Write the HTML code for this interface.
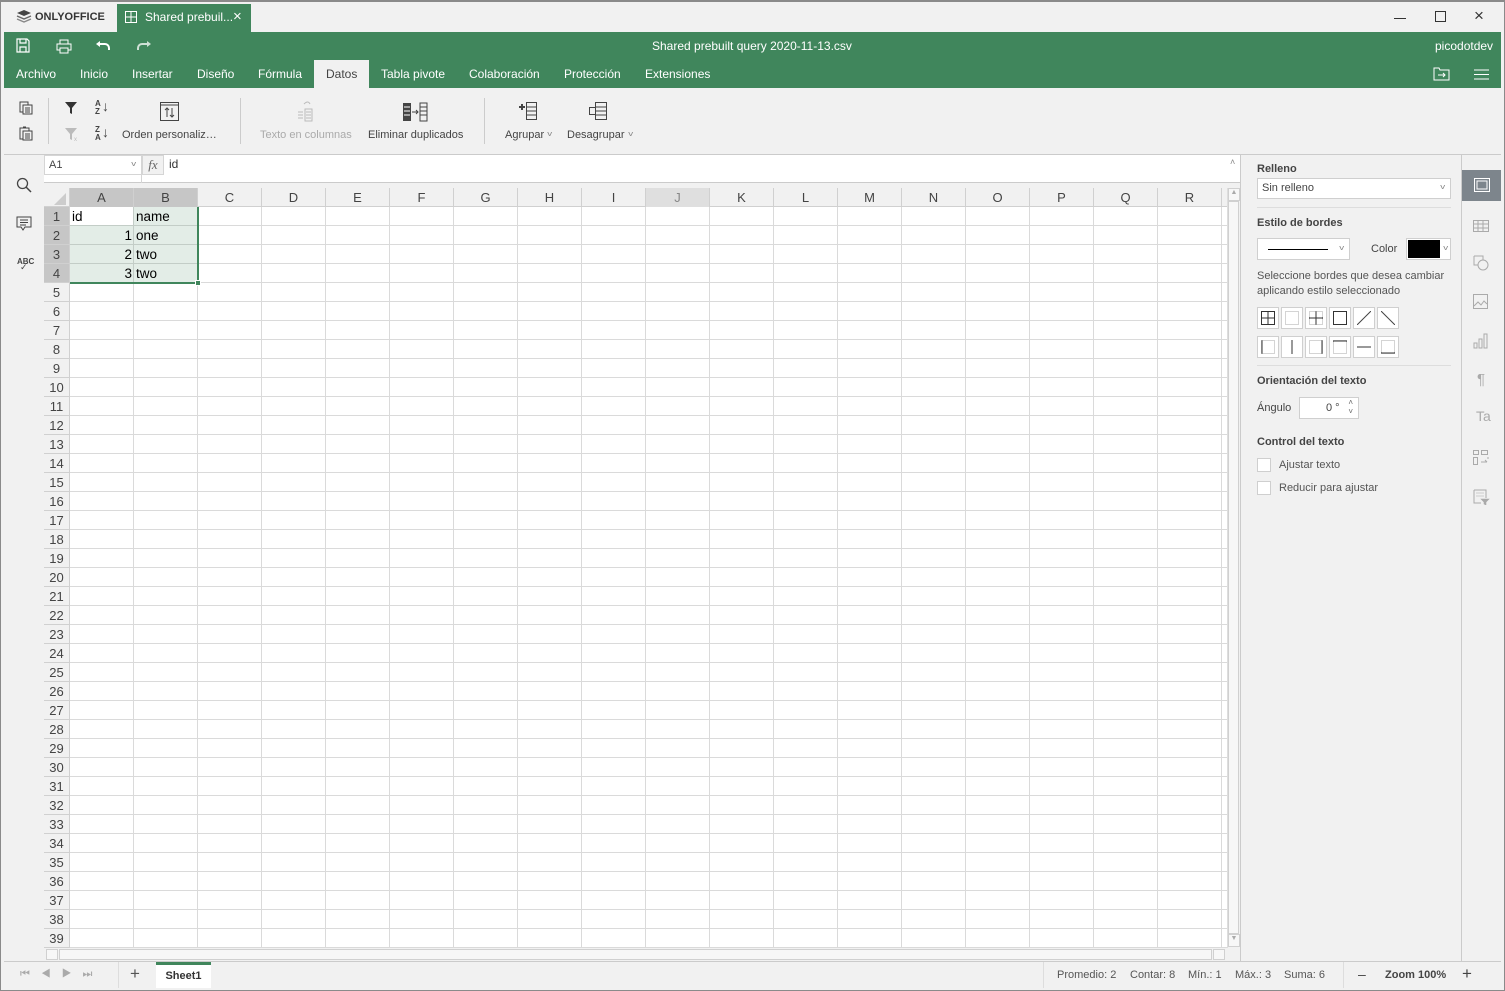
<!DOCTYPE html>
<html><head><meta charset="utf-8"><style>
*{box-sizing:border-box;margin:0;padding:0}
body{width:1505px;height:991px;overflow:hidden;background:#f1f1f1;font-family:"Liberation Sans",sans-serif;font-size:12px;color:#444;position:relative}
.a{position:absolute}
.g{color:#fff}
.tab{position:absolute;top:60px;height:28px;line-height:28px;color:#fff;font-size:12px}
.tl{position:absolute;font-size:11px;color:#444;white-space:nowrap}
.ch{position:absolute;top:188px;height:19px;line-height:19px;text-align:center;width:64px;font-size:13px;color:#444;border-right:1px solid #d0d0d0}
.rh{position:absolute;left:44px;width:25px;height:19px;line-height:19px;text-align:center;font-size:13px;color:#444;border-bottom:1px solid #d0d0d0}
.cell{position:absolute;height:19px;line-height:19px;font-family:"Liberation Sans",sans-serif;font-size:13.5px;color:#000}
.bb{position:absolute;width:22px;height:22px;border:1px solid #cfcfcf;background:#fff}
.ri{position:absolute;left:1473px;width:18px;height:16px}
.st{position:absolute;top:969px;font-size:11px;color:#555;white-space:nowrap}
.chev{position:absolute;font-size:7px;color:#888;transform:scaleX(1.4)}
</style></head><body>
<div class="a" style="left:0;top:0;width:1505px;height:991px;border:1px solid #8a8a8a;border-top:2px solid #8a8a8a;pointer-events:none;z-index:9"></div>
<div class="a" style="left:16px;top:9px;width:16px;height:14px">
<svg width="16" height="14" viewBox="0 0 16 14"><path d="M8 1L15 4 8 7 1 4Z" fill="#444"/><path d="M1 7L8 10 15 7" fill="none" stroke="#666" stroke-width="1.4"/><path d="M1 10L8 13 15 10" fill="none" stroke="#888" stroke-width="1.4"/></svg></div>
<div class="a" style="left:35px;top:11px;font-size:11px;font-weight:bold;color:#333">ONLYOFFICE</div>
<div class="a" style="left:117px;top:4px;width:134px;height:28px;background:#40865c"></div>
<svg class="a" style="left:125px;top:11px" width="12" height="12"><rect x=".5" y=".5" width="11" height="11" fill="none" stroke="#fff"/><path d="M6 0V12M0 6H12" stroke="#fff"/></svg>
<div class="a g" style="left:145px;top:10px;font-size:12px">Shared prebuil...</div>
<div class="a g" style="left:233px;top:8px;font-size:15px">×</div>
<div class="a" style="left:1394px;top:18px;width:12px;height:1px;background:#333"></div>
<div class="a" style="left:1435px;top:11px;width:11px;height:11px;border:1px solid #333"></div>
<div class="a" style="left:1474px;top:6px;font-size:17px;color:#333">×</div>
<div class="a" style="left:4px;top:32px;width:1497px;height:56px;background:#40865c"></div>
<svg class="a" style="left:16px;top:38px" width="14" height="15"><path d="M1 1H11L13 3V14H1Z M4 1V5H10V1 M4 14V9H10V14" fill="none" stroke="#fff" stroke-width="1.2"/></svg>
<svg class="a" style="left:56px;top:39px" width="16" height="15"><rect x="4" y="1" width="8" height="4" fill="none" stroke="#fff"/><rect x="1" y="5" width="14" height="6" fill="none" stroke="#fff"/><rect x="4" y="9" width="8" height="5" fill="#40865c" stroke="#fff"/></svg>
<svg class="a" style="left:96px;top:41px" width="14" height="10"><path d="M3 3H9A4 4 0 0 1 13 7V9" fill="none" stroke="#fff" stroke-width="2"/><path d="M0 3L4 0V6Z" fill="#fff"/></svg>
<svg class="a" style="left:137px;top:41px" width="14" height="10"><path d="M11 3H5A4 4 0 0 0 1 7V9" fill="none" stroke="#cfe0d5" stroke-width="2"/><path d="M14 3L10 0V6Z" fill="#cfe0d5"/></svg>
<div class="a g" style="left:652px;top:39px;font-size:12px">Shared prebuilt query 2020-11-13.csv</div>
<div class="a g" style="left:1435px;top:39px;font-size:12px">picodotdev</div>
<div class="tab" style="left:16px">Archivo</div>
<div class="tab" style="left:80px">Inicio</div>
<div class="tab" style="left:132px">Insertar</div>
<div class="tab" style="left:197px">Diseño</div>
<div class="tab" style="left:258px">Fórmula</div>
<div class="a" style="left:314px;top:60px;width:55px;height:28px;background:#f1f1f1"></div>
<div class="tab" style="left:326px;color:#444">Datos</div>
<div class="tab" style="left:381px">Tabla pivote</div>
<div class="tab" style="left:469px">Colaboración</div>
<div class="tab" style="left:564px">Protección</div>
<div class="tab" style="left:645px">Extensiones</div>
<svg class="a" style="left:1433px;top:67px" width="17" height="14"><path d="M1 1H6L7 3H16V13H1Z" fill="none" stroke="#fff"/><path d="M5 8H12M10 6L12 8 10 10" fill="none" stroke="#fff"/></svg>
<svg class="a" style="left:1474px;top:69px" width="15" height="11"><path d="M0 1H15M0 5.5H15M0 10H15" stroke="#fff"/></svg>
<svg class="a" style="left:19px;top:101px" width="14" height="14"><rect x="1" y="1" width="8" height="10" fill="none" stroke="#444"/><rect x="4" y="4" width="9" height="9" fill="#f1f1f1" stroke="#444"/><path d="M6 7H11M6 9H11M6 11H11" stroke="#444"/></svg>
<svg class="a" style="left:19px;top:126px" width="14" height="15"><rect x="1" y="2" width="9" height="11" fill="none" stroke="#444"/><rect x="4" y="5" width="9" height="9" fill="#f1f1f1" stroke="#444"/><path d="M6 8H11M6 10H11M6 12H11M4 1H7" stroke="#444"/></svg>
<div class="a" style="left:48px;top:98px;width:1px;height:46px;background:#ccc"></div>
<svg class="a" style="left:65px;top:102px" width="12" height="12"><path d="M0 0H12L7 6V12L5 11V6Z" fill="#333"/></svg>
<svg class="a" style="left:65px;top:128px" width="14" height="13"><path d="M0 0H12L7 6V12L5 11V6Z" fill="#bbb"/><text x="9" y="13" font-size="6" fill="#bbb">x</text></svg>
<div class="a" style="left:95px;top:100px;font-size:8px;line-height:8px;color:#444;font-weight:bold">A<br>Z</div>
<div class="a" style="left:102px;top:98px;font-size:14px;color:#444">↓</div>
<div class="a" style="left:95px;top:126px;font-size:8px;line-height:8px;color:#444;font-weight:bold">Z<br>A</div>
<div class="a" style="left:102px;top:124px;font-size:14px;color:#444">↓</div>
<svg class="a" style="left:160px;top:102px" width="20" height="20"><rect x=".5" y=".5" width="18" height="18" fill="none" stroke="#444"/><path d="M0 3H19" stroke="#444"/><path d="M7 15V6M5 8L7 6 9 8M12 6V15M10 13L12 15 14 13" fill="none" stroke="#444"/></svg>
<div class="tl" style="left:122px;top:129px">Orden personaliz…</div>
<div class="a" style="left:240px;top:98px;width:1px;height:46px;background:#ccc"></div>
<svg class="a" style="left:296px;top:100px" width="20" height="22"><path d="M2 12H7M2 15H7M2 18H7" stroke="#bbb"/><rect x="9" y="9" width="7" height="12" fill="none" stroke="#bbb"/><path d="M10 12H15M10 15H15M10 18H15M8 4Q12 0 14 4" fill="none" stroke="#bbb"/></svg>
<div class="tl" style="left:260px;top:129px;color:#aaa">Texto en columnas</div>
<svg class="a" style="left:402px;top:102px" width="26" height="20"><rect x="1" y="1" width="8" height="18" fill="#444"/><path d="M2 5H8M2 9H8M2 13H8" stroke="#fff"/><rect x="18" y="1" width="7" height="18" fill="none" stroke="#444"/><path d="M18 5H25M18 9H25M18 13H25M10 10H16M14 8L16 10 14 12" fill="none" stroke="#444"/></svg>
<div class="tl" style="left:368px;top:129px">Eliminar duplicados</div>
<div class="a" style="left:484px;top:98px;width:1px;height:46px;background:#ccc"></div>
<svg class="a" style="left:518px;top:101px" width="20" height="20"><path d="M1 6H7M4 3V9" stroke="#444" stroke-width="2"/><rect x="8.5" y="1.5" width="10" height="17" fill="none" stroke="#444"/><path d="M8 6H19M8 10H19M8 14H19" stroke="#444"/></svg>
<div class="tl" style="left:505px;top:129px">Agrupar</div><span class="chev" style="left:548px;top:131px">v</span>
<svg class="a" style="left:588px;top:101px" width="20" height="20"><rect x="1.5" y="6.5" width="6" height="7" fill="none" stroke="#444"/><rect x="7.5" y="1.5" width="11" height="17" fill="none" stroke="#444"/><path d="M8 6H19M8 10H19M8 14H19" stroke="#444"/></svg>
<div class="tl" style="left:567px;top:129px">Desagrupar</div><span class="chev" style="left:629px;top:131px">v</span>
<div class="a" style="left:4px;top:154px;width:1497px;height:1px;background:#cbcbcb"></div>
<svg class="a" style="left:16px;top:177px" width="16" height="16"><circle cx="6.5" cy="6.5" r="5" fill="none" stroke="#444" stroke-width="1.3"/><path d="M10 10L15 15" stroke="#444" stroke-width="1.5"/></svg>
<svg class="a" style="left:16px;top:216px" width="16" height="16"><path d="M1 1H15V11H9L7 14 5 11H1Z" fill="none" stroke="#444"/><path d="M4 4H12M4 6.5H12M4 9H10" stroke="#444"/></svg>
<div class="a" style="left:17px;top:257px;font-size:8px;color:#444;font-weight:bold">ABC</div>
<div class="a" style="left:20px;top:262px;font-size:9px;color:#444">✓</div>
<div class="a" style="left:44px;top:155px;width:1196px;height:28px;background:#fff;border-bottom:1px solid #cbcbcb"></div>
<div class="a" style="left:44px;top:155px;width:98px;height:20px;background:#fff;border:1px solid #d5d5d5;font-size:11px;padding:3px 4px;color:#444">A1<span class="chev" style="right:6px;top:5px">v</span></div>
<div class="a" style="left:44px;top:175px;width:98px;height:8px;border-right:1px solid #d5d5d5"></div>
<div class="a" style="left:142px;top:155px;width:22px;height:20px;background:#f1f1f1;border:1px solid #d5d5d5;font-family:'Liberation Serif',serif;font-style:italic;font-size:13px;color:#666;text-align:center;line-height:18px">fx</div>
<div class="a" style="left:169px;top:157px;font-size:12px;color:#333">id</div>
<div class="a" style="left:1230px;top:157px;font-size:9px;color:#888">˄</div>
<div class="a" style="left:44px;top:184px;width:1196px;height:778px;background:#f1f1f1"></div>
<div class="a" style="left:44px;top:188px;width:1183px;height:760px;background:#fff"></div>
<div class="a" style="left:70px;top:207px;width:1157px;height:741px;background-image:repeating-linear-gradient(90deg,transparent 0 63px,#dadada 63px 64px),repeating-linear-gradient(180deg,transparent 0 18px,#dadada 18px 19px)"></div>
<div class="a" style="left:44px;top:188px;width:1183px;height:19px;background:#f1f1f1;border-bottom:1px solid #d0d0d0"></div>
<div class="a" style="left:44px;top:207px;width:26px;height:741px;background:#f1f1f1;border-right:1px solid #d0d0d0"></div>
<div class="a" style="left:44px;top:188px;width:26px;height:19px;border-right:1px solid #d0d0d0"></div>
<svg class="a" style="left:54px;top:193px" width="12" height="12"><path d="M12 0V12H0Z" fill="#ccc"/></svg>
<div class="a" style="left:70px;top:188px;width:128px;height:19px;background:#c6c6c6"></div>
<div class="a" style="left:646px;top:188px;width:64px;height:19px;background:#dfdfdf"></div>
<div class="a" style="left:44px;top:207px;width:25px;height:76px;background:#c6c6c6"></div>
<div class="ch" style="left:70px">A</div><div class="ch" style="left:134px">B</div><div class="ch" style="left:198px">C</div><div class="ch" style="left:262px">D</div><div class="ch" style="left:326px">E</div><div class="ch" style="left:390px">F</div><div class="ch" style="left:454px">G</div><div class="ch" style="left:518px">H</div><div class="ch" style="left:582px">I</div><div class="ch" style="left:646px;color:#888">J</div><div class="ch" style="left:710px">K</div><div class="ch" style="left:774px">L</div><div class="ch" style="left:838px">M</div><div class="ch" style="left:902px">N</div><div class="ch" style="left:966px">O</div><div class="ch" style="left:1030px">P</div><div class="ch" style="left:1094px">Q</div><div class="ch" style="left:1158px">R</div>
<div class="rh" style="top:207px">1</div><div class="rh" style="top:226px">2</div><div class="rh" style="top:245px">3</div><div class="rh" style="top:264px">4</div><div class="rh" style="top:283px">5</div><div class="rh" style="top:302px">6</div><div class="rh" style="top:321px">7</div><div class="rh" style="top:340px">8</div><div class="rh" style="top:359px">9</div><div class="rh" style="top:378px">10</div><div class="rh" style="top:397px">11</div><div class="rh" style="top:416px">12</div><div class="rh" style="top:435px">13</div><div class="rh" style="top:454px">14</div><div class="rh" style="top:473px">15</div><div class="rh" style="top:492px">16</div><div class="rh" style="top:511px">17</div><div class="rh" style="top:530px">18</div><div class="rh" style="top:549px">19</div><div class="rh" style="top:568px">20</div><div class="rh" style="top:587px">21</div><div class="rh" style="top:606px">22</div><div class="rh" style="top:625px">23</div><div class="rh" style="top:644px">24</div><div class="rh" style="top:663px">25</div><div class="rh" style="top:682px">26</div><div class="rh" style="top:701px">27</div><div class="rh" style="top:720px">28</div><div class="rh" style="top:739px">29</div><div class="rh" style="top:758px">30</div><div class="rh" style="top:777px">31</div><div class="rh" style="top:796px">32</div><div class="rh" style="top:815px">33</div><div class="rh" style="top:834px">34</div><div class="rh" style="top:853px">35</div><div class="rh" style="top:872px">36</div><div class="rh" style="top:891px">37</div><div class="rh" style="top:910px">38</div><div class="rh" style="top:929px">39</div>
<div class="a" style="left:70px;top:207px;width:129px;height:77px;background:rgba(64,134,92,0.15);border-right:2px solid #40865c;border-bottom:2px solid #40865c"></div>
<div class="a" style="left:70px;top:207px;width:63px;height:18px;background:#fff"></div>
<div class="a" style="left:195px;top:280px;width:6px;height:6px;background:#40865c;border:1px solid #fff"></div>
<div class="cell" style="left:72px;top:207px">id</div>
<div class="cell" style="left:136px;top:207px">name</div>
<div class="cell" style="left:70px;top:226px;width:62px;text-align:right">1</div>
<div class="cell" style="left:136px;top:226px">one</div>
<div class="cell" style="left:70px;top:245px;width:62px;text-align:right">2</div>
<div class="cell" style="left:136px;top:245px">two</div>
<div class="cell" style="left:70px;top:264px;width:62px;text-align:right">3</div>
<div class="cell" style="left:136px;top:264px">two</div>
<div class="a" style="left:1227px;top:188px;width:13px;height:760px;background:#f1f1f1;border-left:1px solid #ddd"></div>
<div class="a" style="left:1228px;top:188px;width:12px;height:13px;border:1px solid #d0d0d0;background:#f7f7f7;font-size:7px;color:#aaa;text-align:center">▲</div>
<div class="a" style="left:1228px;top:201px;width:11px;height:733px;border:1px solid #d0d0d0;background:#f7f7f7"></div>
<div class="a" style="left:1228px;top:934px;width:12px;height:13px;border:1px solid #d0d0d0;background:#f7f7f7;font-size:7px;color:#aaa;text-align:center">▼</div>
<div class="a" style="left:44px;top:948px;width:1183px;height:13px;background:#f1f1f1"></div>
<div class="a" style="left:46px;top:949px;width:12px;height:11px;border:1px solid #d0d0d0;background:#f7f7f7"></div>
<div class="a" style="left:59px;top:949px;width:1153px;height:11px;border:1px solid #d0d0d0;background:#f7f7f7"></div>
<div class="a" style="left:1213px;top:949px;width:12px;height:11px;border:1px solid #d0d0d0;background:#f7f7f7"></div>
<div class="a" style="left:1240px;top:155px;width:1px;height:807px;background:#cbcbcb"></div>
<div class="a" style="left:1461px;top:155px;width:1px;height:807px;background:#cbcbcb"></div>
<div class="a" style="left:1257px;top:163px;font-size:11px;font-weight:bold;color:#444">Relleno</div>
<div class="a" style="left:1257px;top:178px;width:194px;height:21px;background:#fff;border:1px solid #cfcfcf;font-size:11px;padding:3px 4px">Sin relleno<span class="chev" style="right:6px;top:5px">v</span></div>
<div class="a" style="left:1257px;top:207px;width:194px;height:1px;background:#ddd"></div>
<div class="a" style="left:1257px;top:217px;font-size:11px;font-weight:bold;color:#444">Estilo de bordes</div>
<div class="a" style="left:1257px;top:238px;width:93px;height:22px;background:#fff;border:1px solid #cfcfcf"><div class="a" style="left:10px;top:10px;width:60px;height:1px;background:#000"></div><span class="chev" style="right:6px;top:6px">v</span></div>
<div class="a" style="left:1371px;top:243px;font-size:11px">Color</div>
<div class="a" style="left:1406px;top:238px;width:45px;height:22px;background:#fff;border:1px solid #cfcfcf"><div class="a" style="left:1px;top:1px;width:32px;height:18px;background:#000"></div><span class="chev" style="right:3px;top:6px">v</span></div>
<div class="a" style="left:1257px;top:269px;font-size:11px;line-height:15px;color:#555">Seleccione bordes que desea cambiar<br>aplicando estilo seleccionado</div>
<div class="bb" style="left:1257px;top:307px"><svg class="a" style="left:3px;top:3px" width="14" height="14"><rect x=".5" y=".5" width="13" height="13" fill="none" stroke="#333"/><path d="M7 0V14M0 7H14" stroke="#333"/></svg></div>
<div class="bb" style="left:1281px;top:307px"><svg class="a" style="left:3px;top:3px" width="14" height="14"><rect x=".5" y=".5" width="13" height="13" fill="none" stroke="#aaa" stroke-dasharray="1 1"/></svg></div>
<div class="bb" style="left:1305px;top:307px"><svg class="a" style="left:3px;top:3px" width="14" height="14"><rect x=".5" y=".5" width="13" height="13" fill="none" stroke="#aaa" stroke-dasharray="1 1"/><path d="M7 0V14M0 7H14" stroke="#333"/></svg></div>
<div class="bb" style="left:1329px;top:307px"><svg class="a" style="left:3px;top:3px" width="14" height="14"><rect x=".5" y=".5" width="13" height="13" fill="none" stroke="#333"/></svg></div>
<div class="bb" style="left:1353px;top:307px"><svg class="a" style="left:3px;top:3px" width="14" height="14"><path d="M0 14L14 0" stroke="#444"/></svg></div>
<div class="bb" style="left:1377px;top:307px"><svg class="a" style="left:3px;top:3px" width="14" height="14"><path d="M0 0L14 14" stroke="#444"/></svg></div>
<div class="bb" style="left:1257px;top:336px"><svg class="a" style="left:3px;top:3px" width="14" height="14"><rect x=".5" y=".5" width="13" height="13" fill="none" stroke="#aaa" stroke-dasharray="1 1"/><path d="M1 0V14" stroke="#333"/></svg></div>
<div class="bb" style="left:1281px;top:336px"><svg class="a" style="left:3px;top:3px" width="14" height="14"><path d="M7 0V14" stroke="#333"/></svg></div>
<div class="bb" style="left:1305px;top:336px"><svg class="a" style="left:3px;top:3px" width="14" height="14"><rect x=".5" y=".5" width="13" height="13" fill="none" stroke="#aaa" stroke-dasharray="1 1"/><path d="M13 0V14" stroke="#333"/></svg></div>
<div class="bb" style="left:1329px;top:336px"><svg class="a" style="left:3px;top:3px" width="14" height="14"><rect x=".5" y=".5" width="13" height="13" fill="none" stroke="#aaa" stroke-dasharray="1 1"/><path d="M0 1H14" stroke="#333"/></svg></div>
<div class="bb" style="left:1353px;top:336px"><svg class="a" style="left:3px;top:3px" width="14" height="14"><path d="M0 7H14" stroke="#333"/></svg></div>
<div class="bb" style="left:1377px;top:336px"><svg class="a" style="left:3px;top:3px" width="14" height="14"><rect x=".5" y=".5" width="13" height="13" fill="none" stroke="#aaa" stroke-dasharray="1 1"/><path d="M0 13H14" stroke="#333"/></svg></div>
<div class="a" style="left:1257px;top:365px;width:194px;height:1px;background:#ddd"></div>
<div class="a" style="left:1257px;top:375px;font-size:11px;font-weight:bold;color:#444">Orientación del texto</div>
<div class="a" style="left:1257px;top:402px;font-size:11px">Ángulo</div>
<div class="a" style="left:1299px;top:397px;width:60px;height:22px;background:#fff;border:1px solid #cfcfcf;font-size:11px;padding:4px 0 0 26px">0 °<span style="position:absolute;right:5px;top:0;font-size:8px;color:#666;line-height:9px">˄<br>˅</span></div>
<div class="a" style="left:1257px;top:436px;font-size:11px;font-weight:bold;color:#444">Control del texto</div>
<div class="a" style="left:1257px;top:458px;width:14px;height:14px;background:#fff;border:1px solid #cfcfcf"></div>
<div class="a" style="left:1279px;top:459px;font-size:11px;color:#555">Ajustar texto</div>
<div class="a" style="left:1257px;top:481px;width:14px;height:14px;background:#fff;border:1px solid #cfcfcf"></div>
<div class="a" style="left:1279px;top:482px;font-size:11px;color:#555">Reducir para ajustar</div>
<div class="a" style="left:1462px;top:170px;width:39px;height:31px;background:#7d858c"></div>
<svg class="a" style="left:1474px;top:178px" width="16" height="14"><rect x=".5" y=".5" width="15" height="13" fill="none" stroke="#fff"/><rect x="3" y="3" width="10" height="8" fill="none" stroke="#fff"/></svg>
<svg class="ri" style="top:218px"><rect x=".5" y="2.5" width="15" height="11" fill="none" stroke="#aaa"/><path d="M0 6H16M0 10H16M5 3V13M10 3V13" stroke="#aaa"/></svg>
<svg class="ri" style="top:255px"><path d="M1 1H10V5" fill="none" stroke="#aaa"/><path d="M1 1V10H5" fill="none" stroke="#aaa"/><circle cx="10" cy="10" r="5" fill="none" stroke="#aaa"/></svg>
<svg class="ri" style="top:294px"><rect x=".5" y=".5" width="14" height="14" fill="none" stroke="#aaa"/><path d="M1 12L5 8 8 11 11 7 14 10" fill="none" stroke="#aaa"/></svg>
<svg class="ri" style="top:333px"><path d="M1 10H4V15H1ZM6 6H9V15H6ZM11 1H14V15H11Z" fill="none" stroke="#aaa"/></svg>
<div class="a" style="left:1477px;top:371px;font-size:15px;color:#aaa">¶</div>
<div class="a" style="left:1476px;top:408px;font-size:14px;color:#aaa">Ta</div>
<svg class="ri" style="top:450px"><rect x=".5" y=".5" width="5" height="4" fill="none" stroke="#aaa"/><rect x="8.5" y=".5" width="6" height="4" fill="none" stroke="#aaa"/><rect x=".5" y="7.5" width="4" height="7" fill="none" stroke="#aaa"/><path d="M8 12H14M12 10L14 12M15 9V7" fill="none" stroke="#aaa"/></svg>
<svg class="ri" style="top:489px"><path d="M1 1H13V9M1 1V14H8" fill="none" stroke="#aaa"/><path d="M3 4H11M3 7H11M8 10H16L13 13V16L11 15V13Z" fill="#aaa" stroke="#aaa" stroke-width=".6"/></svg>
<div class="a" style="left:4px;top:961px;width:1497px;height:1px;background:#cbcbcb"></div>
<div class="a" style="left:20px;top:968px;font-size:11px;color:#aaa;letter-spacing:11px">⏮◀▶⏭</div>
<div class="a" style="left:118px;top:962px;width:1px;height:26px;background:#ddd"></div>
<div class="a" style="left:130px;top:964px;font-size:17px;color:#555">+</div>
<div class="a" style="left:156px;top:962px;width:55px;height:26px;background:#fff;border-top:3px solid #40865c;font-size:11px;font-weight:bold;color:#333;text-align:center;line-height:22px">Sheet1</div>
<div class="a" style="left:1043px;top:962px;width:1px;height:26px;background:#ddd"></div>
<div class="st" style="left:1057px">Promedio: 2</div>
<div class="st" style="left:1130px">Contar: 8</div>
<div class="st" style="left:1188px">Mín.: 1</div>
<div class="st" style="left:1235px">Máx.: 3</div>
<div class="st" style="left:1284px">Suma: 6</div>
<div class="a" style="left:1343px;top:962px;width:1px;height:26px;background:#ddd"></div>
<div class="a" style="left:1358px;top:966px;font-size:14px;color:#444">–</div>
<div class="a" style="left:1385px;top:969px;font-size:11px;font-weight:bold;color:#444">Zoom 100%</div>
<div class="a" style="left:1462px;top:964px;font-size:17px;color:#444">+</div>
</body></html>
